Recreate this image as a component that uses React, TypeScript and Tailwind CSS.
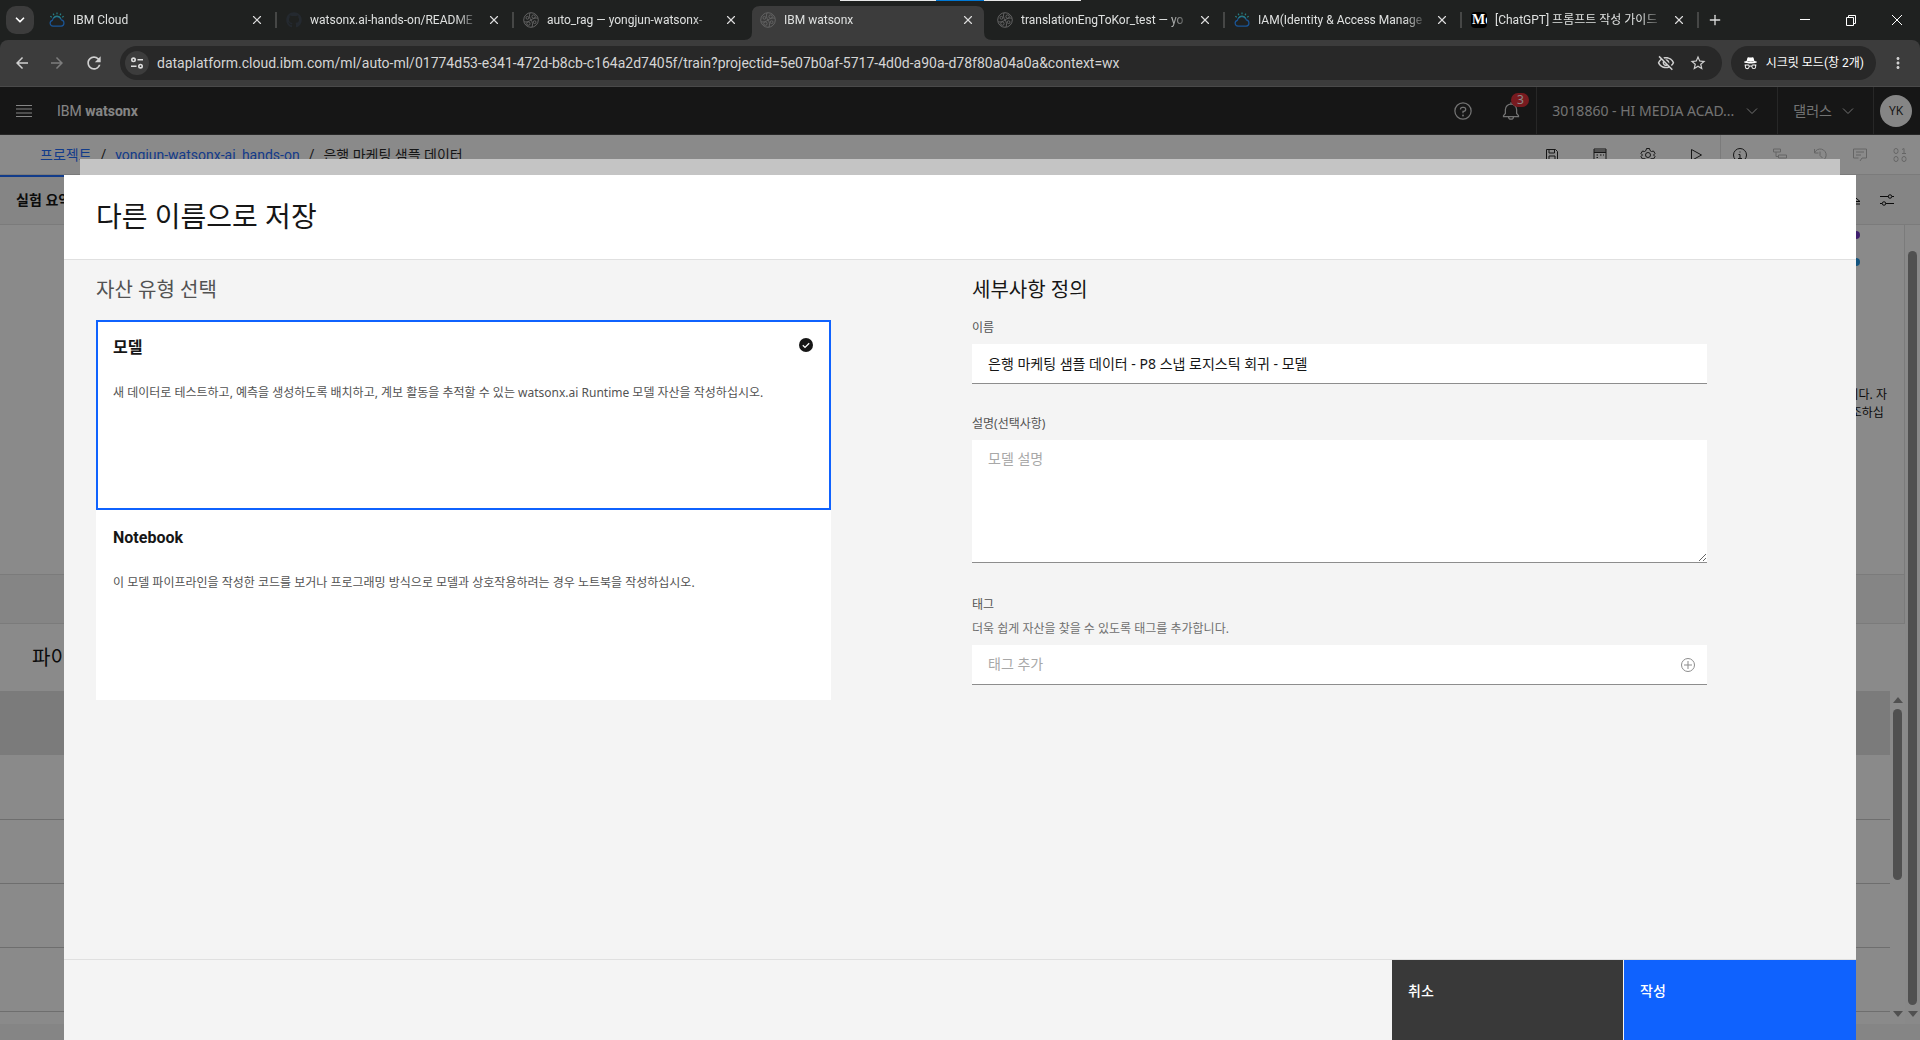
import { ReactNode } from "react";
import {
  MdArrowBack,
  MdArrowForward,
  MdMoreVert,
  MdOutlineStarBorder,
  MdOutlineVisibilityOff,
  MdRefresh,
} from "react-icons/md";
import { BsIncognito } from "react-icons/bs";
import { FaGithub } from "react-icons/fa";
import { ChevronDown, Plus, X } from "lucide-react";

type Tab = { title: string; icon: "cloud" | "github" | "wx" | "medium"; active?: boolean; divider?: boolean };

const tabs: Tab[] = [
  { title: "IBM Cloud", icon: "cloud", divider: true },
  { title: "watsonx.ai-hands-on/README", icon: "github", divider: true },
  { title: "auto_rag — yongjun-watsonx-", icon: "wx" },
  { title: "IBM watsonx", icon: "wx", active: true },
  { title: "translationEngToKor_test — yo", icon: "wx", divider: true },
  { title: "IAM(Identity & Access Manage", icon: "cloud", divider: true },
  { title: "[ChatGPT] 프롬프트 작성 가이드", icon: "medium", divider: true },
];

function CloudIcon() {
  return (
    <svg viewBox="0 0 16 16" className="size-4" fill="none" strokeWidth="1.2">
      <path d="M4 14.2a3 3 0 0 1-.6-5.900 4.700 4.700 0 0 1 9-.4 3.200 3.200 0 0 1-.2 6.300z" stroke="#1a5596" />
      <path d="M4.500 6.200a4 4 0 0 1 7.200.4M8 2.200V.5M5 3.200 4.100 1.600M11 3.200l.9-1.600M2.800 5.200l-1.500-.9M13.200 5.200l1.500-.9" stroke="#277f85" />
    </svg>
  );
}

function WatsonxIcon() {
  return (
    <svg viewBox="0 0 16 16" className="size-4" fill="none" stroke="#636363">
      <circle cx="8" cy="8" r="7.300" />
      <path d="M8 8C6.500 6 6 3.500 7 1M8 8c1.500 2 2 4.500 1 7M8 8C6 9.500 3.500 10.500 1.200 9.800M8 8c2-1.500 4.500-2.500 6.800-1.800" />
      <circle cx="10.600" cy="4.600" r="1.700" />
      <circle cx="5.400" cy="11.600" r="1.700" />
      <circle cx="4.400" cy="5.800" r="1.400" />
      <circle cx="11.600" cy="10.200" r="1.400" />
    </svg>
  );
}

function TabIcon({ icon }: { icon: Tab["icon"] }) {
  if (icon === "cloud") return <CloudIcon />;
  if (icon === "github") return <FaGithub className="size-4 text-[#24292f]" />;
  if (icon === "wx") return <WatsonxIcon />;
  return (
    <span className="flex size-4 items-center overflow-hidden rounded-sm bg-black pl-px font-['Liberation_Serif',serif] text-sm font-bold text-white">
      Me
    </span>
  );
}

function TabStrip() {
  return (
    <div className="relative flex h-10 items-start bg-[#1f2120] pl-[6px]">
      <div className="absolute top-0 left-[840px] flex h-px w-[241px] bg-[#e8e8e8]">
        <div className="ml-[96px] w-12 bg-[#0078d4]" />
      </div>
      <button
        type="button"
        aria-label="탭 검색"
        className="mt-[6px] mr-[7px] flex size-7 shrink-0 items-center justify-center rounded-[10px] bg-[#3c3c3c] text-white"
      >
        <ChevronDown className="size-[14px]" strokeWidth={3} />
      </button>
      {tabs.map((tab) => (
        <div key={tab.title} className="relative flex h-10 w-[237px] items-center pl-2">
          {tab.active && (
            <svg className="absolute top-[6px] -left-2 h-[34px] w-[248px]" viewBox="0 0 248 34" fill="#3c3c3c">
              <path d="M0 34q8 0 8-8V8q0-8 8-8h216q8 0 8 8v18q0 8 8 8z" />
            </svg>
          )}
          <span className="relative flex w-full items-center pr-[11px]">
            <TabIcon icon={tab.icon} />
            <span className="ml-2 w-[170px] overflow-hidden text-xs leading-5 whitespace-nowrap text-[#dfe1e0] [mask-image:linear-gradient(to_right,black_86%,transparent)]">
              {tab.title}
            </span>
            <button type="button" aria-label="탭 닫기" className="ml-[7px] text-[#dcdcdc]">
              <X className="size-[14px]" strokeWidth={2} />
            </button>
          </span>
          {tab.divider && <span className="absolute top-3 right-px h-4 w-[2px] bg-[#464746]" />}
        </div>
      ))}
      <button type="button" aria-label="새 탭" className="mt-3 ml-[7px] text-[#dcdcdc]">
        <Plus className="size-4" />
      </button>
      <div className="mt-[14px] ml-auto flex gap-[34px] pr-[17px] text-white">
        <svg viewBox="0 0 12 12" className="size-3" stroke="currentColor">
          <path d="M1 5.500h10" />
        </svg>
        <svg viewBox="0 0 12 12" className="size-3" fill="none" stroke="currentColor">
          <path d="M1.500 3.500h7v8h-7zM3.500 3V1.500h7v8H9" />
        </svg>
        <svg viewBox="0 0 12 12" className="size-3" stroke="currentColor">
          <path d="m1 1 10 10M11 1 1 11" />
        </svg>
      </div>
    </div>
  );
}

function AddressBar() {
  return (
    <div className="bg-[#1f2120]">
      <div className="flex h-[47px] items-center rounded-t-lg border-b border-[#4a4a4a] bg-[#3c3c3c] text-[#d0d0d0]">
        <button type="button" aria-label="뒤로" className="ml-[13px]">
          <MdArrowBack className="size-[18px]" />
        </button>
        <button type="button" aria-label="앞으로" className="ml-[17px] text-[#7d7d7d]">
          <MdArrowForward className="size-[18px]" />
        </button>
        <button type="button" aria-label="새로고침" className="ml-[18px]">
          <MdRefresh className="size-[20px]" />
        </button>
        <div className="ml-[16px] flex h-[34px] flex-1 items-center rounded-full bg-[#282828] pr-[15px] pl-[5px]">
          <span className="flex size-6 items-center justify-center rounded-full bg-[#3c3c3c]">
            <svg viewBox="0 0 14 14" className="size-[14px]" fill="none" stroke="#dedede" strokeWidth="1.600">
              <circle cx="3.500" cy="3.800" r="1.700" />
              <path d="M7.500 3.800H13M1 10.200h5.500" />
              <circle cx="10.500" cy="10.200" r="1.700" />
            </svg>
          </span>
          <input
            aria-label="주소창"
            className="ml-2 min-w-0 flex-1 bg-transparent text-sm text-[#d5d5d5] outline-none"
            defaultValue="dataplatform.cloud.ibm.com/ml/auto-ml/01774d53-e341-472d-b8cb-c164a2d7405f/train?projectid=5e07b0af-5717-4d0d-a90a-d78f80a04a0a&context=wx"
          />
          <MdOutlineVisibilityOff className="size-[18px]" />
          <MdOutlineStarBorder className="ml-[14px] size-[18px]" />
        </div>
        <span className="ml-[9px] flex h-[34px] items-center rounded-full bg-[#282828] px-3 text-xs text-white">
          <BsIncognito className="mr-2 size-[15px]" />
          시크릿 모드(창 2개)
        </span>
        <button type="button" aria-label="메뉴" className="mx-[13px]">
          <MdMoreVert className="size-[18px]" />
        </button>
      </div>
    </div>
  );
}

function Glyph({ children, className = "size-4" }: { children: ReactNode; className?: string }) {
  return (
    <svg viewBox="0 0 32 32" className={className} fill="none" stroke="currentColor" strokeWidth="2">
      {children}
    </svg>
  );
}

function AppHeader() {
  return (
    <header className="flex h-12 shrink-0 items-center border-b border-[#393939] bg-[#161616] text-sm text-[#d0d0d0]">
      <button type="button" aria-label="메뉴 열기" className="ml-4">
        <svg viewBox="0 0 16 12" className="h-3 w-4" stroke="#f4f4f4">
          <path d="M0 .5h16M0 4h16M0 8h16M0 11.500h16" />
        </svg>
      </button>
      <span className="ml-[25px] font-['Roboto',sans-serif] text-[#f4f4f4]">
        IBM <b className="font-bold">watsonx</b>
      </span>
      <div className="ml-auto flex h-full items-center">
        <Glyph className="mr-[28px] size-5">
          <circle cx="16" cy="16" r="13" />
          <path d="M12 13.500V13a3 3 0 0 1 3-3h2a3.300 3.300 0 0 1 0 6.600h-1V19.500" />
          <circle cx="16" cy="23" r=".6" />
        </Glyph>
        <div className="relative mr-[15px]">
          <Glyph className="size-5">
            <path d="M28 23.500 25 20v-6a9 9 0 0 0-18 0v6l-3 3.500V25h24zM12 25a4 4 0 0 0 8 0M16 5V2" />
          </Glyph>
          <span className="absolute -top-2 left-[10px] flex h-[14px] w-[18px] items-center justify-center rounded-full bg-[#da1e28] text-xs text-white">
            3
          </span>
        </div>
        <button type="button" className="flex h-full items-center gap-[10px] border-l border-[#393939] pr-[17px] pl-[15px]">
          3018860 - HI MEDIA ACAD...
          <Glyph>
            <path d="m6 11 10 10 10-10" />
          </Glyph>
        </button>
        <button type="button" className="flex h-full items-center gap-2 border-x border-[#393939] pr-[17px] pl-[15px]">
          댈러스
          <Glyph>
            <path d="m6 11 10 10 10-10" />
          </Glyph>
        </button>
        <span className="mr-2 ml-[6px] flex size-8 items-center justify-center rounded-full bg-[#f4f4f4] text-xs text-[#161616]">
          YK
        </span>
      </div>
    </header>
  );
}

function Breadcrumbs() {
  return (
    <nav className="flex h-10 shrink-0 items-center border-b border-[#e0e0e0] bg-white pl-10 font-['Roboto','Noto_Sans_CJK_KR',sans-serif] text-sm text-[#161616]">
      <a href="#projects" className="text-[#0f62fe]">프로젝트</a>
      <span className="mx-[9px]">/</span>
      <a href="#project" className="text-[#0f62fe]">yongjun-watsonx-ai_hands-on</a>
      <span className="mx-[9px]">/</span>
      <span>은행 마케팅 샘플 데이터</span>
      <div className="ml-auto flex items-center gap-8">
        <Glyph>
          <path d="M5 5h18l4 4v18H5zM10 5v7h11V5M10 27v-9h12v9" />
        </Glyph>
        <Glyph>
          <path d="M4 4h24v23H4zM4 11h24M4 8h24M9 16h3M16 16h3M9 21h3M22 16h2" />
        </Glyph>
        <Glyph>
          <circle cx="16" cy="16" r="5" />
          <path d="m13 3h6l1 4 3 2 4-1 3 5-3 3 3 3-3 5-4-1-3 2-1 4h-6l-1-4-3-2-4 1-3-5 3-3-3-3 3-5 4 1 3-2z" />
        </Glyph>
        <Glyph>
          <path d="M7 5v22l20-11z" />
        </Glyph>
      </div>
      <div className="ml-4 flex h-full items-center gap-6 border-l border-[#e0e0e0] pr-3 pl-[11px] text-[#b4b4b4]">
        <Glyph className="size-4 text-[#161616]">
          <circle cx="16" cy="16" r="13" />
          <path d="M12 23h8M16 23v-8h-3M16 9v2" />
        </Glyph>
        <Glyph>
          <path d="M3 4h14v6H3zM13 16h16v6H13zM3 28h12M8 10v9h5" />
        </Glyph>
        <Glyph>
          <path d="M5 4v8h8M5 12A12 12 0 1 1 16 28M16 9v8l5 5" />
        </Glyph>
        <Glyph>
          <path d="M16 28l4-6h9V4H3v18h10M8 10h16M8 16h10" />
        </Glyph>
        <Glyph>
          <rect x="4" y="3" width="8" height="10" rx="4" />
          <path d="M20 5l4-2v10M20 13h8" />
          <rect x="4" y="19" width="8" height="10" rx="4" />
          <rect x="20" y="19" width="8" height="10" rx="4" />
        </Glyph>
      </div>
    </nav>
  );
}

function Arrow({ up }: { up?: boolean }) {
  return (
    <svg viewBox="0 0 10 6" className="h-[6px] w-[10px]" fill="#8b8b8b">
      <path d={up ? "M0 6 5 0l5 6z" : "M0 0l5 6 5-6z"} />
    </svg>
  );
}

// Experiment page, seen dimmed behind the dialog
function Experiment() {
  return (
    <div className="flex min-h-0 flex-1 flex-col bg-white">
      <div className="flex h-[50px] shrink-0 items-center justify-between border-b border-[#e0e0e0] bg-[#f4f4f4] pr-[25px]">
        <span className="flex h-full w-[160px] items-center border-t-2 border-[#0f62fe] pb-[2px] pl-4 text-sm font-semibold">
          실험 요약
        </span>
        <div className="flex items-center gap-[18px]">
          <Glyph>
            <path d="M4 24h26M4 19h26L16 7" />
          </Glyph>
          <Glyph>
            <path d="M2 9h17M26 9h4M2 23h4M13 23h17" />
            <circle cx="22" cy="9" r="3.500" />
            <circle cx="10" cy="23" r="3.500" />
          </Glyph>
        </div>
      </div>
      <div className="flex min-h-0 flex-1">
        <div className="flex min-w-0 flex-1 flex-col">
          <div className="flex h-[349px] shrink-0 flex-col items-end border-r border-[#e0e0e0] text-xs">
            <div className="mt-[6px] mr-[44px] flex flex-col gap-[19px]">
              <span className="size-2 rounded-full bg-[#6929c4]" />
              <span className="size-2 rounded-full bg-[#1192e8]" />
            </div>
            <p className="mt-[120px] mr-[17px] leading-[18px] whitespace-nowrap">
              모델입니다. 자
              <br />
              예를 참조하십
            </p>
          </div>
          <div className="h-[50px] shrink-0 border border-l-0 border-[#e0e0e0] bg-[#f4f4f4]" />
          <h2 className="flex h-[67px] shrink-0 items-center pl-8 text-xl">파이프라인 리더보드</h2>
          <div className="flex min-h-0 flex-1">
            <div className="flex-1">
              <div className="h-16 bg-[#e0e0e0]" />
              <div className="h-16" />
              <div className="h-16 border-t border-[#c6c6c6]" />
              <div className="h-16 border-t border-[#c6c6c6]" />
              <div className="h-16 border-t border-[#c6c6c6]" />
              <div className="border-t border-[#c6c6c6]" />
            </div>
            <div className="flex w-[15px] flex-col items-center pt-[6px] pb-[7px]">
              <Arrow up />
              <div className="mt-[6px] mb-auto h-[171px] w-[9px] rounded-full bg-[#8b8b8b]" />
              <Arrow />
            </div>
          </div>
        </div>
        <div className="flex w-[15px] flex-col items-center bg-[#fcfcfc] pt-[26px] pb-[7px]">
          <div className="w-[9px] flex-1 rounded-full bg-[#8b8b8b]" />
          <div className="mt-[6px]">
            <Arrow />
          </div>
        </div>
      </div>
      <div className="h-4 shrink-0 bg-[#f4f4f4]" />
    </div>
  );
}

type AssetCardProps = { title: string; text: string; value: string; selected?: boolean };

function AssetCard({ title, text, value, selected }: AssetCardProps) {
  return (
    <label
      className={
        selected
          ? "relative block h-[190px] border-2 border-[#0f62fe] bg-white p-[15px]"
          : "relative block h-[190px] border-2 border-white bg-white p-[15px]"
      }
    >
      <input type="radio" name="asset" value={value} defaultChecked={selected} className="sr-only" />
      <span className="block font-['Roboto','Noto_Sans_CJK_KR',sans-serif] text-base leading-[22px] font-bold text-[#161616]">
        {title}
      </span>
      <span className="mt-[26px] block text-xs leading-4 text-[#525252]">{text}</span>
      {selected && (
        <svg viewBox="0 0 16 16" className="absolute top-[15px] right-[15px] size-4">
          <circle cx="8" cy="8" r="7" fill="#161616" />
          <path d="m4.800 8.200 2.200 2.200 4.200-4.200" fill="none" stroke="#fff" strokeWidth="1.300" />
        </svg>
      )}
    </label>
  );
}

function SaveDialog() {
  return (
    <div
      className="absolute inset-x-16 top-[88px] bottom-0 flex flex-col bg-[#f4f4f4] text-[#161616]"
      role="dialog"
      aria-labelledby="dialog-title"
    >
      <header className="flex h-[85px] shrink-0 items-center border-b border-[#e0e0e0] bg-white pb-[2px] pl-8">
        <h1 id="dialog-title" className="text-[28px] leading-9">다른 이름으로 저장</h1>
      </header>
      <div className="grid min-h-0 flex-1 grid-cols-2 pt-4 pr-2 pl-8">
        <section className="pr-[141px]">
          <h2 className="text-xl leading-7 text-[#525252]">자산 유형 선택</h2>
          <div className="mt-4">
            <AssetCard
              selected
              value="model"
              title="모델"
              text="새 데이터로 테스트하고, 예측을 생성하도록 배치하고, 계보 활동을 추적할 수 있는 watsonx.ai Runtime 모델 자산을 작성하십시오."
            />
            <AssetCard
              value="notebook"
              title="Notebook"
              text="이 모델 파이프라인을 작성한 코드를 보거나 프로그래밍 방식으로 모델과 상호작용하려는 경우 노트북을 작성하십시오."
            />
          </div>
        </section>
        <section className="flex flex-col pr-[141px]">
          <h2 className="text-xl leading-7">세부사항 정의</h2>
          <label htmlFor="name" className="mt-4 text-xs leading-4 text-[#525252]">이름</label>
          <input
            id="name"
            className="mt-2 h-10 border-b border-[#8d8d8d] bg-white px-4 pb-[2px] text-sm outline-none"
            defaultValue="은행 마케팅 샘플 데이터 - P8 스냅 로지스틱 회귀 - 모델"
          />
          <label htmlFor="description" className="mt-8 text-xs leading-4 text-[#525252]">설명(선택사항)</label>
          <textarea
            id="description"
            placeholder="모델 설명"
            className="mt-2 h-[123px] border-b border-[#8d8d8d] bg-white px-4 py-[9px] text-sm outline-none placeholder:text-[#a8a8a8]"
          />
          <label htmlFor="tag" className="mt-[34px] text-xs leading-4 text-[#525252]">태그</label>
          <p className="mt-2 text-xs leading-4 text-[#6f6f6f]">더욱 쉽게 자산을 찾을 수 있도록 태그를 추가합니다.</p>
          <div className="mt-2 flex h-10 items-center border-b border-[#8d8d8d] bg-white pr-[11px] pl-4">
            <input
              id="tag"
              placeholder="태그 추가"
              className="min-w-0 flex-1 pb-[2px] text-sm outline-none placeholder:text-[#a8a8a8]"
            />
            <button type="button" aria-label="태그 추가" className="text-[#8d8d8d]">
              <Glyph>
                <circle cx="16" cy="16" r="13" />
                <path d="M16 8v16M8 16h16" />
              </Glyph>
            </button>
          </div>
        </section>
      </div>
      <footer className="flex h-[81px] shrink-0 justify-end border-t border-[#e0e0e0] text-sm font-medium text-white">
        <button type="button" className="mr-px flex w-[231px] items-start bg-[#393939] px-4 pt-[21px]">취소</button>
        <button type="button" className="flex w-[232px] items-start bg-[#0f62fe] px-4 pt-[21px]">작성</button>
      </footer>
    </div>
  );
}

export default function App() {
  return (
    <div className="flex h-screen flex-col overflow-hidden font-['Noto_Sans','Noto_Sans_CJK_KR',sans-serif]">
      <div className="font-['Roboto','Noto_Sans_CJK_KR',sans-serif]">
        <TabStrip />
        <AddressBar />
      </div>
      <main className="relative flex min-h-0 flex-1 flex-col">
        <AppHeader />
        <Breadcrumbs />
        <Experiment />
        <div className="absolute inset-0 bg-[#161616]/50" />
        <div className="absolute inset-x-20 top-[72px] h-4 bg-[#c4c4c4]" />
        <SaveDialog />
      </main>
    </div>
  );
}
